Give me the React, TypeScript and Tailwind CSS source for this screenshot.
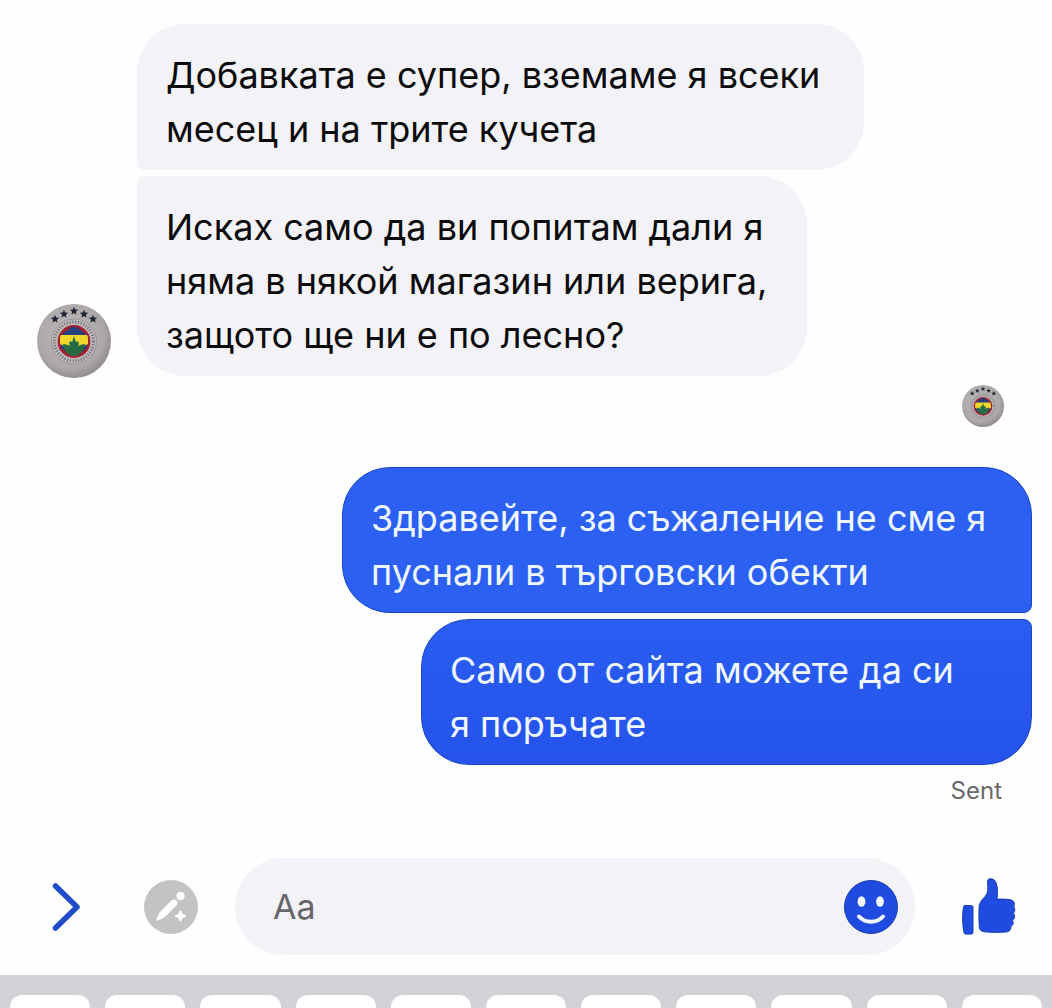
import { clsx } from 'clsx'

const received = [
  {
    lines: ['Добавката е супер, вземаме я всеки', 'месец и на трите кучета'],
    shape: 'w-[727px] rounded-[48px] rounded-bl-lg',
  },
  {
    lines: [
      'Исках само да ви попитам дали я',
      'няма в някой магазин или верига,',
      'защото ще ни е по лесно?',
    ],
    shape: 'w-[670px] rounded-[48px] rounded-tl-lg',
  },
]

const sent = [
  {
    lines: ['Здравейте, за съжаление не сме я', 'пуснали в търговски обекти'],
    shape: 'w-[690px] rounded-[48px] rounded-br-lg bg-[#2b60f2]',
  },
  {
    lines: ['Само от сайта можете да си', 'я поръчате'],
    shape:
      'w-[611px] rounded-[48px] rounded-tr-lg bg-linear-to-b from-[#2a5df1] to-[#2553ec]',
  },
]

const keys = Array.from({ length: 11 }, (_, i) => i)

const stars = [
  { x: 18, y: 15 },
  { x: 27, y: 10 },
  { x: 37, y: 7 },
  { x: 47, y: 10 },
  { x: 56, y: 15 },
]

function Bubble({
  lines,
  shape,
  own,
}: {
  lines: string[]
  shape: string
  own?: boolean
}) {
  return (
    <p
      lang="bg"
      className={clsx(
        'max-w-full text-[36px] leading-[54px] whitespace-nowrap',
        own
          ? 'border border-[#1c46c0] pt-[23px] pb-[13px] pl-7 text-[#f0f8ff]'
          : 'bg-[#f2f2f7] pt-6 pb-3.5 pl-[29px] text-[#0b0b0c]',
        shape,
      )}
    >
      {lines.map(line => (
        <span key={line} className="block">
          {line}
        </span>
      ))}
    </p>
  )
}

function Avatar({ className, id }: { className: string; id: string }) {
  return (
    <svg viewBox="0 0 74 74" className={className} role="img" aria-label="Avatar">
      <defs>
        <radialGradient id={`${id}-ball`} cx="45%" cy="42%" r="60%">
          <stop offset="0" stopColor="#c0bcbe" />
          <stop offset="0.75" stopColor="#aca8aa" />
          <stop offset="1" stopColor="#8d898c" />
        </radialGradient>
        <clipPath id={`${id}-crest`}>
          <circle cx="37" cy="37.500" r="16" />
        </clipPath>
      </defs>
      <circle cx="37" cy="37" r="37" fill={`url(#${id}-ball)`} />
      {stars.map(s => (
        <path
          key={s.x}
          transform={`translate(${s.x} ${s.y}) scale(1.150)`}
          d="M0-3.8 1-1.2 3.7-1.1 1.6.6 2.3 3.2 0 1.7-2.3 3.2-1.6.6-3.7-1.1-1-1.2Z"
          fill="#1f2433"
        />
      ))}
      <circle cx="37" cy="37.500" r="22.500" fill="#bdb9bb" stroke="#8b878c" strokeWidth="0.7" />
      <circle cx="37" cy="37.500" r="19.500" fill="none" stroke="#77747a" strokeWidth="3" strokeDasharray="1.2 1.6" />
      <circle cx="37" cy="37.500" r="16" fill="#a51f2d" />
      <g clipPath={`url(#${id}-crest)`}>
        <path d="M24 31 37 21 50 31V44L37 54 24 44Z" fill="#253f7c" />
        <path d="M23 31h28v9l-6 3H29l-6-3Z" fill="#f0d72c" />
        <path d="M26 40c3 0 5 1 7 2-1-2-1-3 0-5l2 1 2-6 2 6 2-1c1 2 1 3 0 5 2-1 4-2 7-2-1 7-5 11-11 13-6-2-10-6-11-13Z" fill="#276b45" />
      </g>
      <circle cx="37" cy="37.500" r="15.500" fill="none" stroke="#a32330" strokeWidth="1.8" />
    </svg>
  )
}

function ChevronIcon() {
  return (
    <svg viewBox="0 0 30 50" className="h-[50px] w-[30px]" fill="none" aria-hidden="true">
      <path d="M5.500 4 27 25 5.500 46" stroke="#204cc9" strokeWidth="5.500" strokeLinecap="round" strokeLinejoin="round" />
    </svg>
  )
}

function PenIcon() {
  return (
    <svg viewBox="0 0 54 54" className="size-[54px]" aria-hidden="true">
      <circle cx="27" cy="27" r="27" fill="#c3c3c6" />
      <circle cx="36.500" cy="16" r="4.200" fill="#fff" />
      <path
        d="M26.500 21.500c2-2 4-2.800 6-1 1.800 1.800 1.200 3.700-.8 5.700L22.500 35.500c-3 2.700-5.700 4.200-9 5-.8.200-1.200-.3-1-1 1-3.300 2.500-6.200 5-9Z"
        fill="#fff"
      />
      <path
        d="M36.500 30.500c.8 0 1.100.7 1.500 2 .4 1.300.8 1.700 2 2 1.300.4 2 .7 2 1.500s-.7 1.100-2 1.500c-1.200.3-1.600.8-2 2-.4 1.300-.7 2-1.500 2s-1.100-.7-1.500-2c-.4-1.200-.8-1.700-2-2-1.300-.4-2-.7-2-1.500s.7-1.100 2-1.500c1.200-.3 1.600-.7 2-2 .4-1.300.7-2 1.500-2Z"
        fill="#fff"
      />
    </svg>
  )
}

function SmileIcon() {
  return (
    <svg viewBox="0 0 54 54" className="size-[54px]" aria-hidden="true">
      <circle cx="27" cy="27" r="26.500" fill="#1f4be0" stroke="#193fae" />
      <ellipse cx="17.500" cy="21.500" rx="3.900" ry="5.200" fill="#f3f8ff" />
      <ellipse cx="36" cy="21.500" rx="3.900" ry="5.200" fill="#f3f8ff" />
      <path d="M15 36.500c6.500 7 17.500 7 24 0" fill="none" stroke="#f3f8ff" strokeWidth="4" strokeLinecap="round" />
    </svg>
  )
}

function ThumbIcon() {
  return (
    <svg viewBox="0 0 54 58" className="h-[58px] w-[54px]" fill="#1f4be0" stroke="#193fae" aria-hidden="true">
      <path d="M3 27.500h6.200c1.200 0 1.800.7 1.800 1.800v25c0 1.200-.6 1.800-1.800 1.800H3.800c-1 0-1.500-.5-1.800-1.500-1.700-8-1.800-17-.6-25.300.2-1.200.6-1.800 1.600-1.800Z" />
      <path d="M28.500.7c-2.300 0-3.200 1.500-3 4 .3 3.500.9 7-.6 10.800-1.700 4.200-6.200 6.500-7.400 10.800-.8 3-.7 15-.2 22.700.2 3 2 4.500 5 4.800 6.500.6 14.500.8 21.500.2 3.500-.3 5.700-2.300 5-5.500 2.500-1.200 3.100-4 1.600-6.200 2.500-1.700 2.900-4.700 1-7 1.800-2 1.900-4.600.3-6.600 1.900-4-.3-6.800-4.700-7.200-4-.4-8-.5-12-.4.700-6.500.9-11-.8-16-.9-2.800-2.900-4.400-5.700-4.400Z" />
    </svg>
  )
}

export default function App() {
  return (
    <div className="flex min-h-screen flex-col overflow-hidden bg-[#fefefe] font-['Inter',sans-serif]">
      <main className="flex flex-col pt-6">
        {/* Incoming messages */}
        <section className="flex items-end gap-[26px] pl-[37px]">
          <Avatar id="sender" className="-mb-0.5 size-[74px] shrink-0" />
          <div className="flex flex-col gap-1.5">
            {received.map(m => (
              <Bubble key={m.lines[0]} {...m} />
            ))}
          </div>
        </section>

        {/* Seen marker */}
        <div className="flex justify-end pt-[9px] pr-12">
          <Avatar id="seen" className="size-[42px]" />
        </div>

        {/* Outgoing messages */}
        <section className="flex flex-col items-end gap-1.5 pt-10 pr-5">
          {sent.map(m => (
            <Bubble key={m.lines[0]} {...m} own />
          ))}
        </section>
        <p className="pt-2.5 pr-[50px] text-right text-2xl leading-8 text-[#68686b]">Sent</p>
      </main>

      {/* Composer */}
      <form className="mt-[51px] flex items-center pr-9 pl-[50px]" onSubmit={e => e.preventDefault()}>
        <button type="button" aria-label="More actions">
          <ChevronIcon />
        </button>
        <button type="button" aria-label="Edit" className="ml-16">
          <PenIcon />
        </button>
        <div className="ml-[37px] flex h-[97px] min-w-0 flex-1 items-center rounded-[48px] bg-[#f2f2f7] pr-[17px] pl-[38px]">
          <input
            type="text"
            aria-label="Message"
            placeholder="Aa"
            className="min-w-0 flex-1 bg-transparent text-[34px] text-[#0b0b0c] outline-none placeholder:text-[#67676b]"
          />
          <button type="button" aria-label="Emoji">
            <SmileIcon />
          </button>
        </div>
        <button type="button" aria-label="Like" className="ml-[47px]">
          <ThumbIcon />
        </button>
      </form>

      {/* Top edge of the keyboard */}
      <div className="mt-5 grid h-[33px] grid-cols-11 gap-[15px] bg-[#d1d1d6] px-2.5 pt-5">
        {keys.map(k => (
          <div key={k} className="rounded-t-xl bg-white" />
        ))}
      </div>
    </div>
  )
}
